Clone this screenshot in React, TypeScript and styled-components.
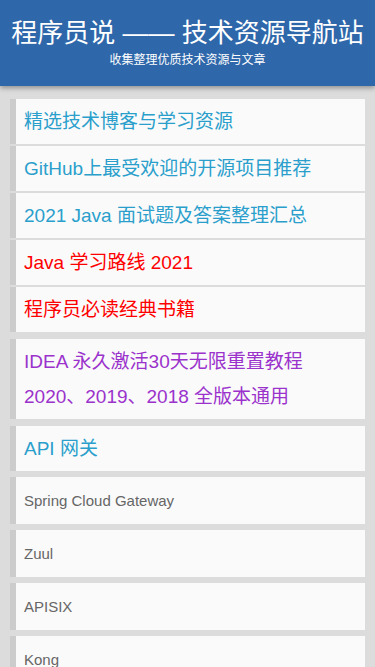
import React from "react";
import styled, { createGlobalStyle } from "styled-components";

const GlobalStyle = createGlobalStyle`
  html, body {
    margin: 0;
    padding: 0;
    background: #dcdcdc;
    font-family: "Liberation Sans", Arial, "Noto Sans CJK SC", sans-serif;
  }
`;

const Header = styled.header`
  background: #2e67aa;
  color: #ffffff;
  text-align: center;
  padding: 15px 0 17px;
  box-shadow: 0 2px 5px rgba(0, 0, 0, 0.35);
`;

const Title = styled.h1`
  margin: 0;
  font-size: 26px;
  line-height: 36px;
  font-weight: normal;
  white-space: nowrap;
`;

const Subtitle = styled.p`
  margin: 0;
  font-size: 12px;
  line-height: 18px;
`;

const List = styled.main`
  display: flex;
  flex-direction: column;
  padding: 13px 10px 0;
`;

type Tone = "blue" | "red" | "purple" | "gray";

const toneColor: Record<Tone, string> = {
  blue: "#2a9fcc",
  red: "#ff0000",
  purple: "#9b32cc",
  gray: "#666666",
};

const Card = styled.a<{ $tone: Tone; $small?: boolean; $gap: number }>`
  display: block;
  background: #fafafa;
  border-left: 6px solid #cccccc;
  margin-bottom: ${(p) => p.$gap}px;
  padding: ${(p) => (p.$small ? "6px 8px" : "5px 8px")};
  color: ${(p) => toneColor[p.$tone]};
  font-size: ${(p) => (p.$small ? "15px" : "19px")};
  line-height: 35px;
  text-decoration: none;
`;

type Item = { text: React.ReactNode; tone: Tone; small?: boolean; gap: number };

const items: Item[] = [
  { text: "精选技术博客与学习资源", tone: "blue", gap: 2 },
  { text: "GitHub上最受欢迎的开源项目推荐", tone: "blue", gap: 2 },
  { text: "2021 Java 面试题及答案整理汇总", tone: "blue", gap: 2 },
  { text: "Java 学习路线 2021", tone: "red", gap: 2 },
  { text: "程序员必读经典书籍", tone: "red", gap: 7 },
  {
    text: (
      <>
        IDEA 永久激活30天无限重置教程
        <br />
        2020、2019、2018 全版本通用
      </>
    ),
    tone: "purple",
    gap: 7,
  },
  { text: "API 网关", tone: "blue", gap: 6 },
  { text: "Spring Cloud Gateway", tone: "gray", small: true, gap: 6 },
  { text: "Zuul", tone: "gray", small: true, gap: 6 },
  { text: "APISIX", tone: "gray", small: true, gap: 6 },
  { text: "Kong", tone: "gray", small: true, gap: 6 },
];

export default function App() {
  return (
    <>
      <GlobalStyle />
      <Header>
        <Title>程序员说 —— 技术资源导航站</Title>
        <Subtitle>收集整理优质技术资源与文章</Subtitle>
      </Header>
      <List>
        {items.map((it, i) => (
          <Card key={i} href="#" $tone={it.tone} $small={it.small} $gap={it.gap}>
            {it.text}
          </Card>
        ))}
      </List>
    </>
  );
}
